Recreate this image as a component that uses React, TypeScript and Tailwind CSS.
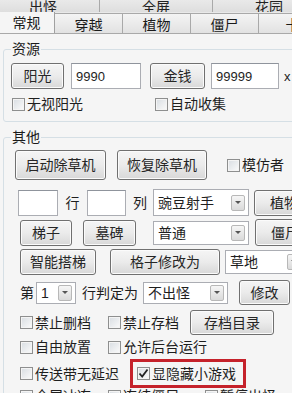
import React from "react";

const font = "font-['Liberation_Sans','Noto_Sans_CJK_SC',sans-serif]";

function Btn({ label, className }: { label: string; className: string }) {
  return (
    <div
      className={`flex shrink-0 items-center justify-center rounded-[3px] border border-[#707070] bg-linear-to-b from-[#f5f5f5] via-[#ebebeb] to-[#d8d8d8] text-[14px] leading-none text-[#262626] shadow-[inset_0_0_0_1px_#fbfbfb] ${className}`}
    >
      {label}
    </div>
  );
}

function Box({ checked }: { checked?: boolean }) {
  return (
    <div className="flex h-[13px] w-[13px] shrink-0 items-center justify-center border border-[#8e8f8f] bg-linear-to-br from-[#d8dde2] to-[#fbfbfb] shadow-[inset_0_0_0_1px_#f4f4f4]">
      {checked && (
        <svg width="11" height="11" viewBox="0 0 11 11">
          <path d="M1.5 5.5 L4.2 8.5 L9.5 1.5" fill="none" stroke="#222" strokeWidth="1.8" />
        </svg>
      )}
    </div>
  );
}

function Cb({ label, checked, className = "" }: { label: string; checked?: boolean; className?: string }) {
  return (
    <div className={`flex shrink-0 items-center ${className}`}>
      <Box checked={checked} />
      <span className="ml-[2px] text-[14px] leading-none text-[#1e1e1e]">{label}</span>
    </div>
  );
}

function Combo({ value, className }: { value: string; className: string }) {
  return (
    <div className={`flex shrink-0 items-center border border-[#abadb3] bg-white ${className}`}>
      <span className="flex-1 pl-[4px] text-[14px] leading-none text-[#1e1e1e]">{value}</span>
      <div className="mr-[3px] flex h-[16px] w-[14px] items-center justify-center rounded-[2px] border border-[#b8b8b8] bg-linear-to-b from-[#f6f6f6] to-[#dadada]">
        <svg width="6" height="4" viewBox="0 0 6 4">
          <path d="M0 0 H6 L3 3 Z" fill="#555" />
        </svg>
      </div>
    </div>
  );
}

function Input({ value = "", className }: { value?: string; className: string }) {
  return (
    <div className={`flex shrink-0 items-center border border-[#abadb3] border-t-[#8f949c] bg-white pl-[4px] text-[13px] leading-none text-[#1e1e1e] ${className}`}>
      {value}
    </div>
  );
}

export default function App() {
  const topTabs = ["出怪", "全屏", "花园"];
  const tabs = ["穿越", "植物", "僵尸", "卡"];

  return (
    <div className={`${font} flex h-[393px] w-[292px] flex-col overflow-hidden bg-[#f5f5f5]`}>
      {/* upper tab row, mostly cut off */}
      <div className="flex h-[12px] shrink-0 overflow-hidden bg-[#e4e4e4]">
        {topTabs.map((t, i) => (
          <div
            key={t}
            className={`flex h-[12px] w-[113px] shrink-0 items-end justify-center border-r border-[#a9a9a9] bg-linear-to-b from-[#e9e9e9] to-[#dedede] ${i === 0 ? "ml-[-13px]" : ""}`}
          >
            <span className="mb-[-3px] text-[14px] leading-[16px] text-[#222]">{t}</span>
          </div>
        ))}
      </div>

      {/* lower tab row */}
      <div className="flex h-[22px] shrink-0 items-end overflow-hidden border-b border-[#a9a9a9] bg-[#e9e9e9]">
        <div className="relative z-10 mb-[-1px] ml-[-12px] flex h-[23px] w-[67px] shrink-0 items-center justify-center border border-b-0 border-[#a0a0a0] bg-[#f5f5f5] pr-0">
          <span className="pl-[10px] text-[14px] leading-none text-[#1a1a1a]">常规</span>
        </div>
        {tabs.map((t) => (
          <div
            key={t}
            className="flex h-[20px] w-[68px] shrink-0 items-center justify-center border-r border-t border-[#a9a9a9] bg-linear-to-b from-[#f4f4f4] to-[#e2e2e2] pt-[2px]"
          >
            <span className="text-[14px] leading-none text-[#1a1a1a]">{t}</span>
          </div>
        ))}
      </div>

      {/* panel */}
      <div className="flex flex-1 flex-col pl-[3px]">
        <fieldset className="mt-[7px] w-[310px] rounded-[3px] border border-[#d5dfe5] pb-[8px]">
          <legend className="ml-[7px] px-[1px] text-[14px] leading-[16px] text-[#1a1a1a]">资源</legend>
          <div className="ml-[7px] mt-[6px] flex items-center">
            <Btn label="阳光" className="h-[26px] w-[53px]" />
            <Input value="9990" className="ml-[7px] h-[26px] w-[70px]" />
            <Btn label="金钱" className="ml-[9px] h-[26px] w-[55px]" />
            <Input value="99999" className="ml-[6px] h-[26px] w-[68px]" />
            <span className="ml-[5px] text-[13px] leading-none text-[#222]">x</span>
          </div>
          <div className="ml-[8px] mt-[6px] flex h-[18px] items-center">
            <Cb label="无视阳光" className="w-[143px]" />
            <Cb label="自动收集" />
          </div>
        </fieldset>

        <fieldset className="mt-[7px] w-[310px] rounded-[3px] border border-[#d5dfe5]">
          <legend className="ml-[7px] px-[1px] text-[14px] leading-[16px] text-[#1a1a1a]">其他</legend>
          <div className="ml-[11px] mt-[5px] flex items-center">
            <Btn label="启动除草机" className="h-[30px] w-[91px]" />
            <Btn label="恢复除草机" className="ml-[11px] h-[30px] w-[90px]" />
            <Cb label="模仿者" className="ml-[20px]" />
          </div>

          <div className="ml-[14px] mt-[9px] flex h-[27px] items-center">
            <Input className="h-[26px] w-[40px]" />
            <span className="w-[29px] text-center text-[14px] leading-none text-[#1e1e1e]">行</span>
            <Input className="h-[26px] w-[39px]" />
            <span className="w-[27px] pl-[7px] text-[14px] leading-none text-[#1e1e1e]">列</span>
            <Combo value="豌豆射手" className="h-[27px] w-[96px]" />
            <Btn label="植物" className="ml-[5px] h-[26px] w-[60px]" />
          </div>

          <div className="ml-[16px] mt-[3px] flex h-[27px] items-center">
            <Btn label="梯子" className="h-[26px] w-[52px]" />
            <Btn label="墓碑" className="ml-[11px] h-[26px] w-[53px]" />
            <Combo value="普通" className="ml-[17px] h-[24px] w-[96px]" />
            <Btn label="僵尸" className="ml-[6px] h-[27px] w-[60px]" />
          </div>

          <div className="ml-[16px] mt-[3px] flex h-[26px] items-center">
            <Btn label="智能搭梯" className="h-[26px] w-[76px]" />
            <Btn label="格子修改为" className="ml-[14px] h-[26px] w-[110px]" />
            <Combo value="草地" className="ml-[5px] h-[24px] w-[80px]" />
          </div>

          <div className="ml-[16px] mt-[5px] flex h-[25px] items-center">
            <span className="w-[16px] text-[14px] leading-none text-[#1e1e1e]">第</span>
            <Combo value="1" className="h-[22px] w-[40px]" />
            <span className="ml-[6px] text-[14px] leading-none text-[#1e1e1e]">行判定为</span>
            <Combo value="不出怪" className="ml-[5px] h-[22px] w-[85px]" />
            <Btn label="修改" className="ml-[11px] h-[25px] w-[51px]" />
          </div>

          <div className="ml-[16px] mt-[5px] flex h-[25px] items-center">
            <Cb label="禁止删档" className="w-[88px]" />
            <Cb label="禁止存档" className="w-[82px]" />
            <Btn label="存档目录" className="h-[25px] w-[84px]" />
          </div>

          <div className="ml-[16px] flex h-[24px] items-center">
            <Cb label="自由放置" className="w-[88px]" />
            <Cb label="允许后台运行" />
          </div>

          <div className="ml-[16px] flex h-[29px] items-center">
            <Cb label="传送带无延迟" className="w-[110px]" />
            <div className="flex h-[29px] w-[116px] items-center border-[3px] border-[#c5222b] pl-[4px]">
              <Cb label="显隐藏小游戏" checked />
            </div>
          </div>

          <div className="ml-[16px] mt-[1px] flex h-[24px] items-start">
            <Cb label="全屏冰冻" className="w-[88px]" />
            <Cb label="冻结僵尸" className="w-[97px]" />
            <Cb label="暂停出怪" />
          </div>
        </fieldset>
      </div>
    </div>
  );
}
